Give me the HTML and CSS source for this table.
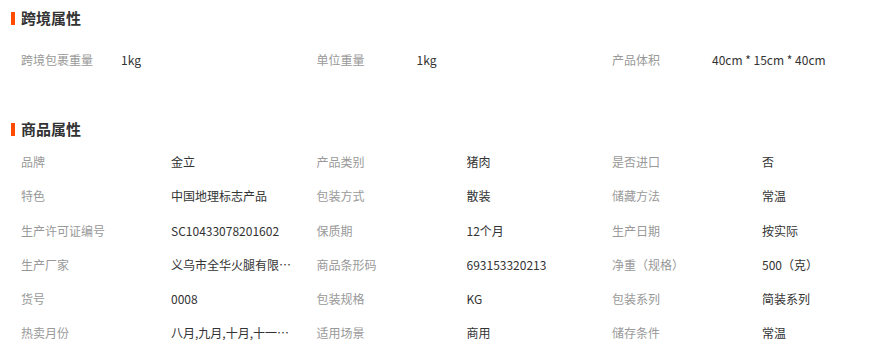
FILE: index.html
```html
<!DOCTYPE html>
<html lang="zh-CN">
<head>
<meta charset="utf-8">
<title>属性</title>
<link rel="stylesheet" href="styles.css">
</head>
<body>
<section class="block block-cross">
  <h2 class="block-title"><span class="bar"></span>跨境属性</h2>
  <div class="attrs attrs-cross">
    <div class="attr"><span class="label">跨境包裹重量</span><span class="value">1kg</span></div>
    <div class="attr"><span class="label">单位重量</span><span class="value">1kg</span></div>
    <div class="attr"><span class="label">产品体积</span><span class="value">40cm * 15cm * 40cm</span></div>
  </div>
</section>
<section class="block block-goods">
  <h2 class="block-title"><span class="bar"></span>商品属性</h2>
  <div class="attrs attrs-goods">
    <div class="attr"><span class="label">品牌</span><span class="value">金立</span></div>
    <div class="attr"><span class="label">产品类别</span><span class="value">猪肉</span></div>
    <div class="attr"><span class="label">是否进口</span><span class="value">否</span></div>
    <div class="attr"><span class="label">特色</span><span class="value">中国地理标志产品</span></div>
    <div class="attr"><span class="label">包装方式</span><span class="value">散装</span></div>
    <div class="attr"><span class="label">储藏方法</span><span class="value">常温</span></div>
    <div class="attr"><span class="label">生产许可证编号</span><span class="value">SC10433078201602</span></div>
    <div class="attr"><span class="label">保质期</span><span class="value">12个月</span></div>
    <div class="attr"><span class="label">生产日期</span><span class="value">按实际</span></div>
    <div class="attr"><span class="label">生产厂家</span><span class="value">义乌市全华火腿有限公司</span></div>
    <div class="attr"><span class="label">商品条形码</span><span class="value">693153320213</span></div>
    <div class="attr"><span class="label">净重（规格）</span><span class="value">500（克）</span></div>
    <div class="attr"><span class="label">货号</span><span class="value">0008</span></div>
    <div class="attr"><span class="label">包装规格</span><span class="value">KG</span></div>
    <div class="attr"><span class="label">包装系列</span><span class="value">简装系列</span></div>
    <div class="attr"><span class="label">热卖月份</span><span class="value">八月,九月,十月,十一月,十二月</span></div>
    <div class="attr"><span class="label">适用场景</span><span class="value">商用</span></div>
    <div class="attr"><span class="label">储存条件</span><span class="value">常温</span></div>
  </div>
</section>
</body>
</html>
```
FILE: styles.css
```css
html, body {
  margin: 0;
  padding: 0;
  background: #fff;
}
body {
  font-family: "Noto Sans CJK SC", "Liberation Sans", sans-serif;
  font-size: 12px;
  color: #333;
}
.block-title {
  display: flex;
  align-items: center;
  gap: 6px;
  height: 20px;
  margin: 0;
  padding-left: 11px;
  font-size: 15px;
  font-weight: bold;
  color: #333;
  line-height: 20px;
}
.bar {
  display: block;
  width: 4px;
  height: 13px;
  background: #ff4a00;
}
.block-cross {
  padding-top: 8px;
}
.block-cross .attrs {
  margin-top: 15px;
}
.block-goods {
  margin-top: 42px;
}
.block-goods .attrs {
  margin-top: 6px;
}
.attrs {
  display: grid;
  grid-template-columns: repeat(3, 295.5px);
  padding-left: 21px;
}
.attr {
  display: flex;
  align-items: center;
  height: 34.2px;
  line-height: 18px;
}
.label {
  color: #999;
  flex: 0 0 auto;
  white-space: nowrap;
}
.attrs-cross .label {
  width: 100px;
}
.attrs-goods .label {
  width: 150px;
}
.value {
  color: #333;
  white-space: nowrap;
}
.attrs-goods .value {
  max-width: 122px;
  overflow: hidden;
  text-overflow: ellipsis;
}
```
